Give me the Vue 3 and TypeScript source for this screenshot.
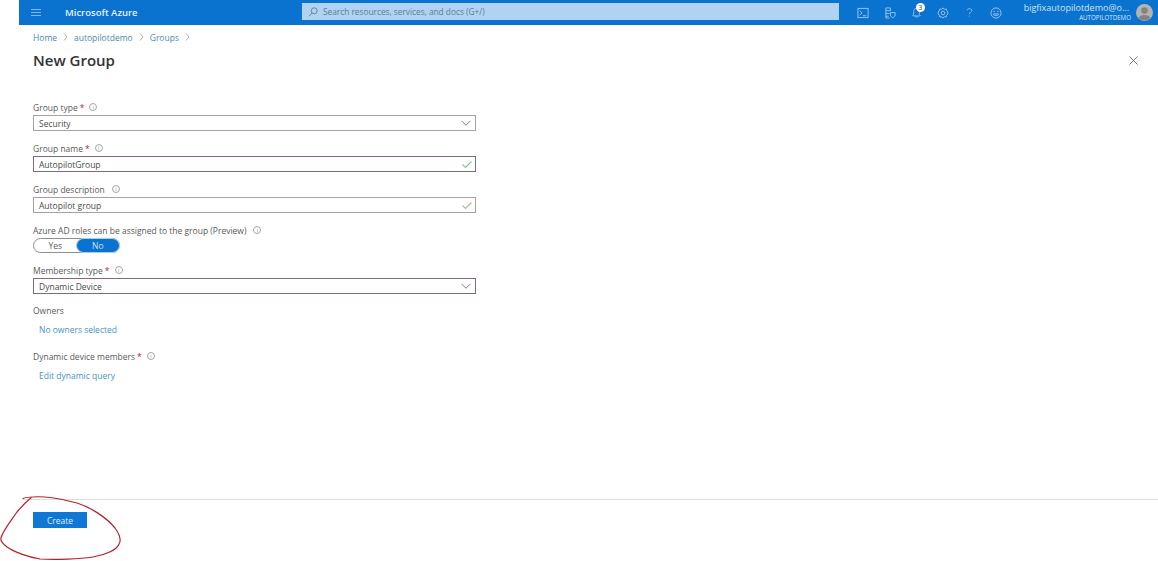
<script setup lang="ts">
interface Crumb { label: string }
const crumbs: Crumb[] = [{ label: 'Home' }, { label: 'autopilotdemo' }, { label: 'Groups' }]
</script>

<template>
  <div class="page">
    <header class="topbar">
      <svg class="burger" width="10" height="7" viewBox="0 0 10 7"><path d="M0 .5h10M0 3.500h10M0 6.500h10" stroke="#7db8ea" stroke-width="1" fill="none" /></svg>
      <span class="brand">Microsoft Azure</span>
      <div class="search">
        <svg width="10" height="10" viewBox="0 0 10 10" fill="none" stroke="#5d7f9f" stroke-width="0.9"><circle cx="6.200" cy="3.800" r="3" /><path d="M4 6 1 9.200" /></svg>
        <span>Search resources, services, and docs (G+/)</span>
      </div>
      <div class="tools">
        <svg width="12" height="12" viewBox="0 0 13 13" fill="none" stroke="#9cc8ee" stroke-width="1"><rect x="1" y="1.500" width="11" height="10" /><path d="m3 4 2.500 2.500L3 9M6.500 9.500h3.500" /></svg>
        <svg width="12" height="12" viewBox="0 0 13 13" fill="none" stroke="#9cc8ee" stroke-width="1"><path d="M2 1h5v3H2zM2 4v8h4M2 7h4M2 10h3" /><path d="M7 6h5v3.500L9.500 12 7 9.500z" /></svg>
        <span class="bell">
          <svg width="11" height="13" viewBox="0 0 13 14" fill="none" stroke="#9cc8ee" stroke-width="1"><path d="M6.500 2C4 2 3.200 4 3.200 6v3L2 11h9L9.800 9V6C9.800 4 9 2 6.500 2zM5 11.500c.3 1.500 2.700 1.500 3 0" /></svg>
          <b>3</b>
        </span>
        <svg width="12" height="12" viewBox="0 0 13 13" fill="none" stroke="#9cc8ee" stroke-width="1"><circle cx="6.500" cy="6.500" r="2" /><path d="M6.500 1 8 2.400l2-.2.500 2L12 5.500l-.7 1 .7 1-1.500 1.300-.5 2-2-.2L6.500 12 5 10.600l-2 .2-.5-2L1 7.500l.7-1-.7-1 1.500-1.300.5-2 2 .2z" /></svg>
        <svg width="7" height="11" viewBox="0 0 9 13" fill="none" stroke="#9cc8ee" stroke-width="1.100"><path d="M1.500 3.500C1.500 1 7.500 1 7.500 3.800c0 2-3 2.200-3 4.700M4.500 10.500v1.200" /></svg>
        <svg width="12" height="12" viewBox="0 0 13 13" fill="none" stroke="#9cc8ee" stroke-width="1"><circle cx="6.500" cy="6.500" r="5.500" /><path d="M3.500 7.500c1 2.500 5 2.500 6 0zM3.800 4.800h1.500M7.700 4.800h1.500" /></svg>
      </div>
      <div class="account">
        <span class="email">bigfixautopilotdemo@o...</span>
        <span class="tenant">AUTOPILOTDEMO</span>
      </div>
      <span class="avatar">
        <svg width="17" height="17" viewBox="0 0 17 17"><circle cx="8.500" cy="8.500" r="8.500" fill="#b5b3b1" /><circle cx="8.500" cy="6.500" r="3.300" fill="#858382" /><path d="M2.500 14c1-4 11-4 12 0a8.500 8.500 0 0 1-12 0z" fill="#858382" /></svg>
      </span>
    </header>

    <main class="content">
      <nav class="crumbs">
        <template v-for="c in crumbs" :key="c.label">
          <a>{{ c.label }}</a>
          <svg width="5" height="8" viewBox="0 0 5 8" fill="none" stroke="#9a9a9a" stroke-width="0.8"><path d="m1 .5 3 3.500-3 3.500" /></svg>
        </template>
      </nav>
      <div class="title-row">
        <h1>New Group</h1>
        <svg width="9" height="9" viewBox="0 0 9 9" fill="none" stroke="#555" stroke-width="0.8"><path d="m.5.5 8 8M8.500.5l-8 8" /></svg>
      </div>

      <form class="form" @submit.prevent>
        <div class="field">
          <label>Group type <em>*</em><i class="info">i</i></label>
          <div class="box plain"><span>Security</span><svg width="10" height="6" viewBox="0 0 11 6" fill="none" stroke="#666" stroke-width="0.9"><path d="m.5.500 5 5 5-5" /></svg></div>
        </div>
        <div class="field">
          <label>Group name <em>*</em><i class="info">i</i></label>
          <div class="box valid"><span>AutopilotGroup</span><svg class="check" width="10" height="7" viewBox="0 0 10 7" fill="none" stroke="#86c886" stroke-width="1.100"><path d="m.5 3.500 3 3 6-6" /></svg></div>
        </div>
        <div class="field">
          <label>Group description<i class="info">i</i></label>
          <div class="box valid soft"><span>Autopilot group</span><svg class="check" width="10" height="7" viewBox="0 0 10 7" fill="none" stroke="#97c694" stroke-width="1.100"><path d="m.5 3.500 3 3 6-6" /></svg></div>
        </div>
        <div class="field">
          <label>Azure AD roles can be assigned to the group (Preview)<i class="info">i</i></label>
          <div class="toggle"><span class="opt">Yes</span><span class="opt on">No</span></div>
        </div>
        <div class="field membership">
          <label>Membership type <em>*</em><i class="info">i</i></label>
          <div class="box valid"><span>Dynamic Device</span><svg width="10" height="6" viewBox="0 0 11 6" fill="none" stroke="#666" stroke-width="0.9"><path d="m.5.500 5 5 5-5" /></svg></div>
        </div>
        <div class="field link-field">
          <label>Owners</label>
          <a>No owners selected</a>
        </div>
        <div class="field link-field">
          <label>Dynamic device members <em>*</em><i class="info">i</i></label>
          <a>Edit dynamic query</a>
        </div>
      </form>
    </main>

    <footer class="footer">
      <button type="button" class="create">Create</button>
      <svg class="scribble" width="124" height="66" viewBox="0 0 124 66" fill="none" stroke="#b3222c" stroke-width="1.200" stroke-linecap="round"><path d="M23 2.500C26 1 29 1 33 1C42 0 60 2 77 7C90 11 106 21 115 32C120 39 121 45 119 48C117 54 105 59 93 61C80 63 55 64 40 63C28 61 14 56 7 51C3 48 0 45 1 42C2 36 10 26 17 16C22 10 27 5 32 1" /></svg>
    </footer>
  </div>
</template>

<style>
html, body { margin: 0; background: #fff; }
</style>

<style scoped>
.page {
  position: relative;
  width: 1158px;
  height: 561px;
  overflow: hidden;
  display: flex;
  flex-direction: column;
  font-family: "Open Sans", "Noto Sans", sans-serif;
  font-size: 8.500px;
  color: #4a4a4a;
  background: #fff;
}
.topbar {
  display: flex;
  align-items: center;
  height: 25px;
  margin-left: 19px;
  background: #0a72cf;
  color: #fff;
  flex: none;
}
.burger { margin-left: 12px; }
.brand { margin-left: 24px; font-size: 9.500px; font-weight: 600; color: #e6f2fb; width: 237px; }
.search {
  display: flex;
  align-items: center;
  gap: 5px;
  width: 537px;
  height: 17px;
  margin-bottom: 2px;
  padding-left: 6px;
  box-sizing: border-box;
  background: #b0d3f1;
  color: #5b7d9b;
  font-size: 8.300px;
}
.tools {
  display: grid;
  grid-template-columns: repeat(6, 26.500px);
  justify-items: center;
  align-items: center;
  margin-left: 11px;
}
.bell { position: relative; display: flex; }
.bell b {
  position: absolute;
  top: -3px;
  left: 5px;
  width: 9px;
  height: 9px;
  border-radius: 50%;
  background: #fff;
  color: #333;
  font-size: 6.500px;
  font-weight: 400;
  line-height: 9px;
  text-align: center;
}
.account {
  display: flex;
  flex-direction: column;
  align-items: flex-end;
  margin-left: auto;
  line-height: 1;
}
.email { font-size: 9px; color: #cfe4f6; margin-right: 2px; }
.tenant { font-size: 6.200px; color: #d5e8f8; margin-top: 3px; }
.avatar { display: flex; margin: 0 5px 0 5px; }
.content { flex: 1; padding: 0 19px 0 33px; }
.crumbs { display: flex; align-items: center; gap: 6px; height: 16px; margin-top: 4px; color: #4a89b3; font-size: 8.500px; }
.title-row { display: flex; align-items: center; justify-content: space-between; height: 22px; margin-top: 4px; padding-right: 1px; }
h1 { margin: 0; font-size: 15px; font-weight: 600; color: #333; line-height: 22px; }
.form { display: flex; flex-direction: column; width: 443px; margin-top: 30px; }
.field { display: flex; flex-direction: column; margin-bottom: 11px; }
label { display: flex; align-items: center; height: 12px; margin-bottom: 2px; color: #5a5a5a; font-size: 8.500px; }
label em { font-style: normal; color: #b3262e; margin-left: 2px; }
.info {
  display: inline-block;
  width: 6px;
  height: 6px;
  margin-left: 7px;
  border: 1px solid #a5a5a5;
  border-radius: 50%;
  color: #888;
  font-size: 5px;
  font-style: normal;
  line-height: 6px;
  text-align: center;
}
em + .info { margin-left: 5px; }
.box {
  display: flex;
  align-items: center;
  justify-content: space-between;
  height: 14px;
  padding: 0 4px 0 5px;
  color: #4a4a4a;
}
.box.plain { border: 1px solid #a6a5a4; }
.box.valid { border: 1px solid #7d6a80; }
.box.soft { border-color: #a89fa9; }
.check { margin-right: -1px; }
.toggle {
  display: flex;
  width: 85px;
  height: 13px;
  border: 1px solid #8f8f8f;
  border-radius: 8px;
}
.opt { flex: 1; display: flex; align-items: center; justify-content: center; border-radius: 8px; color: #5a5a5a; }
.opt.on { background: #0a72cf; color: #cfe4f6; box-shadow: 0 0 0 1px #a8cdea; }
.membership { margin-bottom: 10px; }
.link-field { margin-bottom: 14px; }
.link-field label { margin-bottom: 8px; }
.link-field a { display: block; margin-left: 6px; color: #4a92c4; font-size: 8.500px; line-height: 12px; }
.footer {
  position: relative;
  flex: none;
  height: 62px;
  margin-left: 22px;
  border-top: 1px solid #ddd;
  box-sizing: border-box;
  padding: 12px 0 0 11px;
}
.create {
  display: block;
  width: 54px;
  height: 16px;
  padding: 0;
  border: 0;
  background: #0f78d4;
  color: #dfeefa;
  font-family: inherit;
  font-size: 8.500px;
}
.scribble { position: absolute; left: -22px; top: -4px; }
</style>
